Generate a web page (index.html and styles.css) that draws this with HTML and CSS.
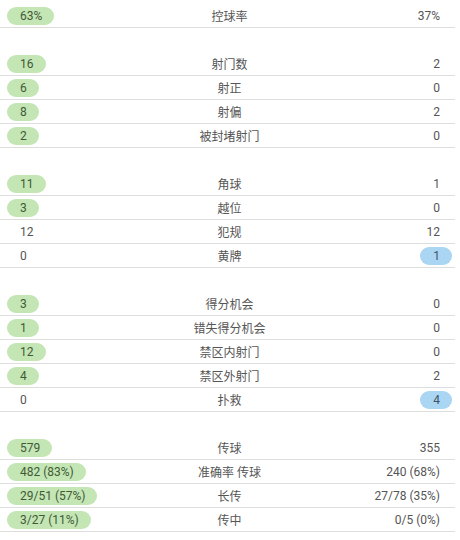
FILE: index.html
```html
<!DOCTYPE html>
<html lang="zh">
<head>
<meta charset="utf-8">
<link rel="stylesheet" href="styles.css">
</head>
<body>
<div class="stats">
  <div class="group">
    <div class="row"><span class="v l"><span class="pill g">63%</span></span><span class="label">控球率</span><span class="v r"><span class="pill">37%</span></span></div>
  </div>
  <div class="group">
    <div class="row"><span class="v l"><span class="pill g">16</span></span><span class="label">射门数</span><span class="v r"><span class="pill">2</span></span></div>
    <div class="row"><span class="v l"><span class="pill g">6</span></span><span class="label">射正</span><span class="v r"><span class="pill">0</span></span></div>
    <div class="row"><span class="v l"><span class="pill g">8</span></span><span class="label">射偏</span><span class="v r"><span class="pill">2</span></span></div>
    <div class="row"><span class="v l"><span class="pill g">2</span></span><span class="label">被封堵射门</span><span class="v r"><span class="pill">0</span></span></div>
  </div>
  <div class="group">
    <div class="row"><span class="v l"><span class="pill g">11</span></span><span class="label">角球</span><span class="v r"><span class="pill">1</span></span></div>
    <div class="row"><span class="v l"><span class="pill g">3</span></span><span class="label">越位</span><span class="v r"><span class="pill">0</span></span></div>
    <div class="row"><span class="v l"><span class="pill">12</span></span><span class="label">犯规</span><span class="v r"><span class="pill">12</span></span></div>
    <div class="row"><span class="v l"><span class="pill">0</span></span><span class="label">黄牌</span><span class="v r"><span class="pill b">1</span></span></div>
  </div>
  <div class="group">
    <div class="row"><span class="v l"><span class="pill g">3</span></span><span class="label">得分机会</span><span class="v r"><span class="pill">0</span></span></div>
    <div class="row"><span class="v l"><span class="pill g">1</span></span><span class="label">错失得分机会</span><span class="v r"><span class="pill">0</span></span></div>
    <div class="row"><span class="v l"><span class="pill g">12</span></span><span class="label">禁区内射门</span><span class="v r"><span class="pill">0</span></span></div>
    <div class="row"><span class="v l"><span class="pill g">4</span></span><span class="label">禁区外射门</span><span class="v r"><span class="pill">2</span></span></div>
    <div class="row"><span class="v l"><span class="pill">0</span></span><span class="label">扑救</span><span class="v r"><span class="pill b">4</span></span></div>
  </div>
  <div class="group">
    <div class="row"><span class="v l"><span class="pill g">579</span></span><span class="label">传球</span><span class="v r"><span class="pill">355</span></span></div>
    <div class="row"><span class="v l"><span class="pill g">482 (83%)</span></span><span class="label">准确率 传球</span><span class="v r"><span class="pill">240 (68%)</span></span></div>
    <div class="row"><span class="v l"><span class="pill g">29/51 (57%)</span></span><span class="label">长传</span><span class="v r"><span class="pill">27/78 (35%)</span></span></div>
    <div class="row"><span class="v l"><span class="pill g">3/27 (11%)</span></span><span class="label">传中</span><span class="v r"><span class="pill">0/5 (0%)</span></span></div>
  </div>
</div>
</body>
</html>
```
FILE: styles.css
```css
html, body {
  margin: 0;
  padding: 0;
  background: #ffffff;
}
body {
  font-family: Roboto, "Noto Sans CJK SC", sans-serif;
  font-size: 12px;
  color: #555555;
}
.stats {
  padding-top: 4px;
  width: 455px;
}
.group {
  margin-bottom: 24px;
}
.row {
  display: grid;
  grid-template-columns: 1fr auto 1fr;
  align-items: center;
  height: 24px;
  box-sizing: border-box;
  border-bottom: 1px solid #dedede;
  padding: 0 3px 0 7px;
}
.v {
  display: flex;
}
.v.l {
  justify-content: flex-start;
}
.v.r {
  justify-content: flex-end;
}
.label {
  text-align: center;
  color: #555555;
}
.pill {
  display: inline-block;
  height: 18px;
  line-height: 18px;
  padding: 0 12px 0 13px;
  border-radius: 9px;
  white-space: nowrap;
}
.pill.g {
  background: #c4e5b4;
  color: #3f5a37;
}
.pill.b {
  background: #aad5f3;
  color: #3f5566;
}
```
